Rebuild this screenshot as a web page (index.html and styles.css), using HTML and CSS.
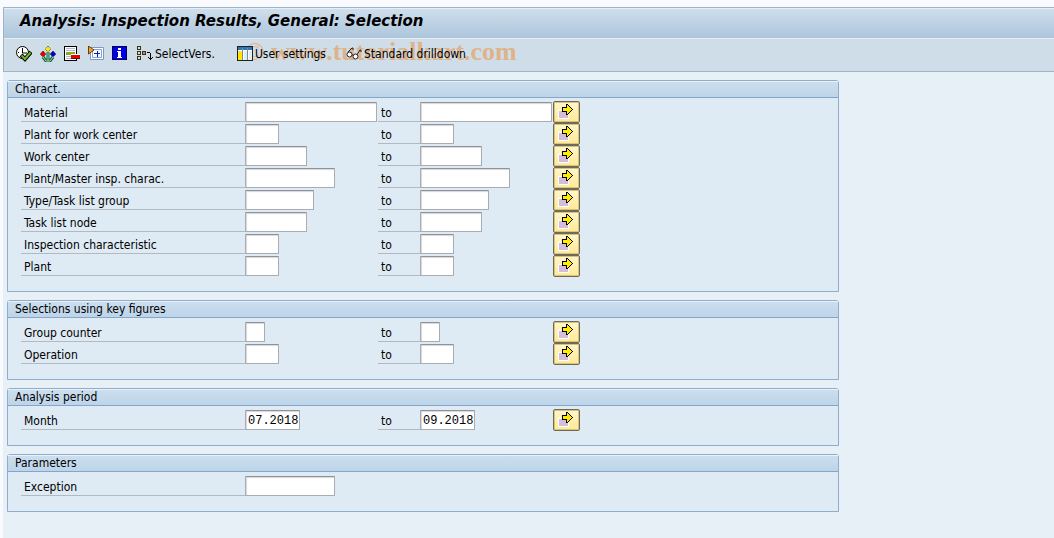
FILE: index.html
```html
<!DOCTYPE html>
<html lang="en">

<head>
  <meta charset="UTF-8">
  <title>Analysis: Inspection Results, General: Selection</title>
  <link rel="stylesheet" href="styles.css">
</head>

<body>
  <svg class="defs" aria-hidden="true">
    <symbol id="more" viewBox="0 0 15 16">
      <path fill="#fff" d="M0 6h11v9H0z"/>
      <path fill="#d3bddd" d="M1 7h9v7H1z"/>
      <path fill="#000" d="M8 0h2v1h1v1h1v1h1v1h1v1h1v1h-1v1h-1v1h-1v1h-1v1h-1v1H8V8H4V3h4z"/>
      <path fill="#ffec00" d="M9 1h1v1h1v1h1v1h1v1h1v1h-1v1h-1v1h-1v1h-1v1H9V7H5V4h4z"/>
    </symbol>
  </svg>

  <div class="window">
    <h1 class="title">Analysis: Inspection Results, General: Selection</h1>

    <div class="toolbar">
      <button class="tool" aria-label="Execute">
        <svg width="16" height="16" viewBox="0 0 16 16">
          <circle cx="6.500" cy="6.500" r="6" fill="#fff" stroke="#000"/>
          <path d="M6.500 2v5H11M2 6.500h1M6.500 10v2" fill="none" stroke="#000"/>
          <path d="M5 9l4 4 6-7" fill="none" stroke="#000" stroke-width="4"/>
          <path d="M5.500 9.500L9 13l5.500-6.500" fill="none" stroke="#76b82a" stroke-width="2"/>
        </svg>
      </button>
      <button class="tool" aria-label="Get variant">
        <svg width="16" height="16" viewBox="0 0 16 16">
          <path d="M8 6v9M3 11l3 4h4l3-4" fill="none" stroke="#1c5c3c" stroke-width="3"/>
          <path d="M8 6v9M3 11l3 4h4l3-4" fill="none" stroke="#8fe0b0"/>
          <path d="M8 0l3 3-3 3-3-3z" fill="#ffe500" stroke="#555" stroke-dasharray="1 1"/>
          <path d="M3 5l3 3-3 3-3-3z" fill="#e80000" stroke="#333" stroke-dasharray="1 1"/>
          <path d="M13 5l3 3-3 3-3-3z" fill="#0000d8" stroke="#333" stroke-dasharray="1 1"/>
        </svg>
      </button>
      <button class="tool" aria-label="Delete selection row">
        <svg width="16" height="16" viewBox="0 0 16 16" shape-rendering="crispEdges">
          <path d="M0 0h13v15H0z" fill="#000"/>
          <path d="M1 1h11v13H1z" fill="#fff"/>
          <path d="M2 2h9v1H2zM2 4h9v1H2zM2 10h5v1H2zM2 12h5v1H2z" fill="#b4b4cc"/>
          <path d="M2 6h9v3H2z" fill="#86ac20"/>
          <path d="M7 8h9v5H7z" fill="#fff"/>
          <path d="M7 9h9v3H7z" fill="#e80000"/>
          <path d="M7 12h9v1H7z" fill="#701010"/>
        </svg>
      </button>
      <button class="tool" aria-label="Dynamic selections">
        <svg width="16" height="16" viewBox="0 0 16 16">
          <path d="M2.500 1.500h13v12h-13z" fill="#fff" stroke="#8098c8"/>
          <path d="M4.500 3.500h9v8h-9z" fill="#f4f8ff" stroke="#88a0d8"/>
          <path d="M9.500 5v6M6 7.500h6" stroke="#0020c0" fill="none"/>
          <path d="M.5 0v8l5.500-4z" fill="#f8a020" stroke="#604010"/>
        </svg>
      </button>
      <button class="tool" aria-label="Information">
        <svg width="16" height="16" viewBox="0 0 16 16" shape-rendering="crispEdges">
          <path d="M0 0h15v14H0z" fill="#000050"/>
          <path d="M1 1h13v12H1z" fill="#0000e8"/>
          <path d="M6 2h3v2H6zM5 5h4v6h1v1H5v-1h1V6H5z" fill="#fff"/>
        </svg>
      </button>
      <button class="tool">
        <svg width="17" height="16" viewBox="0 0 17 16" shape-rendering="crispEdges">
          <path d="M1 0h4v4H1zM1 5h4v4H1zM1 10h4v4H1zM6 5h4v4H6z" fill="#333"/>
          <path d="M2 1h2v2H2zM2 6h2v2H2zM2 11h2v2H2z" fill="#d8e890"/>
          <path d="M7 6h2v2H7z" fill="#f88020"/>
          <path d="M11 6h3v1h1v5h1v-1h1v1h-1v1h-1v1h-1v-1h-1v-1h-1v-1h1v1h1V7h-3z" fill="#000"/>
        </svg>
        SelectVers.
      </button>
      <button class="tool settings">
        <svg width="16" height="16" viewBox="0 0 16 16" shape-rendering="crispEdges">
          <path d="M0 0h16v15H0z" fill="#202020"/>
          <path d="M1 1h14v13H1z" fill="#fff"/>
          <path d="M1 1h14v3H1z" fill="#2878c0"/>
          <path d="M1 5h4v9H1z" fill="#ffe500"/>
          <path d="M5 2h1v12H5zM10 2h1v12h-1z" fill="#808890"/>
          <path d="M7 5h3v9H7zM12 5h3v9h-3z" fill="#dceef6"/>
        </svg>
        User settings
      </button>
      <button class="tool drill">
        <svg width="16" height="16" viewBox="0 0 16 16">
          <g fill="none" stroke="#222">
            <circle cx="3.500" cy="8.500" r="2.500" fill="#fff"/>
            <circle cx="9.500" cy="10.500" r="2.500" fill="#fff"/>
            <path d="M2 6l4-4h1v2M6 8.500l1.500 1M11 8.500L14 4h1v2"/>
          </g>
        </svg>
        Standard drilldown
      </button>
      <span class="watermark"><span class="copy">©</span> www.tutorialkart.com</span>
    </div>

    <form class="content">
      <fieldset class="group">
        <legend class="head">Charact.</legend>
        <div class="row">
          <label class="name" for="material">Material</label>
          <input class="w18" id="material">
          <label class="to" for="material-to">to</label>
          <input class="w18" id="material-to">
          <button type="button" class="more" aria-label="Multiple selection"><svg width="15" height="16"><use href="#more"/></svg></button>
        </div>
        <div class="row">
          <label class="name" for="wcplant">Plant for work center</label>
          <input class="w4" id="wcplant">
          <label class="to" for="wcplant-to">to</label>
          <input class="w4" id="wcplant-to">
          <button type="button" class="more" aria-label="Multiple selection"><svg width="15" height="16"><use href="#more"/></svg></button>
        </div>
        <div class="row">
          <label class="name" for="wc">Work center</label>
          <input class="w8" id="wc">
          <label class="to" for="wc-to">to</label>
          <input class="w8" id="wc-to">
          <button type="button" class="more" aria-label="Multiple selection"><svg width="15" height="16"><use href="#more"/></svg></button>
        </div>
        <div class="row">
          <label class="name" for="master">Plant/Master insp. charac.</label>
          <input class="w12" id="master">
          <label class="to" for="master-to">to</label>
          <input class="w12" id="master-to">
          <button type="button" class="more" aria-label="Multiple selection"><svg width="15" height="16"><use href="#more"/></svg></button>
        </div>
        <div class="row">
          <label class="name" for="tasklist">Type/Task list group</label>
          <input class="w9" id="tasklist">
          <label class="to" for="tasklist-to">to</label>
          <input class="w9" id="tasklist-to">
          <button type="button" class="more" aria-label="Multiple selection"><svg width="15" height="16"><use href="#more"/></svg></button>
        </div>
        <div class="row">
          <label class="name" for="node">Task list node</label>
          <input class="w8" id="node">
          <label class="to" for="node-to">to</label>
          <input class="w8" id="node-to">
          <button type="button" class="more" aria-label="Multiple selection"><svg width="15" height="16"><use href="#more"/></svg></button>
        </div>
        <div class="row">
          <label class="name" for="inspchar">Inspection characteristic</label>
          <input class="w4" id="inspchar">
          <label class="to" for="inspchar-to">to</label>
          <input class="w4" id="inspchar-to">
          <button type="button" class="more" aria-label="Multiple selection"><svg width="15" height="16"><use href="#more"/></svg></button>
        </div>
        <div class="row">
          <label class="name" for="plant">Plant</label>
          <input class="w4" id="plant">
          <label class="to" for="plant-to">to</label>
          <input class="w4" id="plant-to">
          <button type="button" class="more" aria-label="Multiple selection"><svg width="15" height="16"><use href="#more"/></svg></button>
        </div>
      </fieldset>

      <fieldset class="group">
        <legend class="head">Selections using key figures</legend>
        <div class="row">
          <label class="name" for="counter">Group counter</label>
          <input class="w2" id="counter">
          <label class="to" for="counter-to">to</label>
          <input class="w2" id="counter-to">
          <button type="button" class="more" aria-label="Multiple selection"><svg width="15" height="16"><use href="#more"/></svg></button>
        </div>
        <div class="row">
          <label class="name" for="operation">Operation</label>
          <input class="w4" id="operation">
          <label class="to" for="operation-to">to</label>
          <input class="w4" id="operation-to">
          <button type="button" class="more" aria-label="Multiple selection"><svg width="15" height="16"><use href="#more"/></svg></button>
        </div>
      </fieldset>

      <fieldset class="group">
        <legend class="head">Analysis period</legend>
        <div class="row">
          <label class="name" for="month">Month</label>
          <input class="w7" id="month" value="07.2018">
          <label class="to" for="month-to">to</label>
          <input class="w7" id="month-to" value="09.2018">
          <button type="button" class="more" aria-label="Multiple selection"><svg width="15" height="16"><use href="#more"/></svg></button>
        </div>
      </fieldset>

      <fieldset class="group">
        <legend class="head">Parameters</legend>
        <div class="row">
          <label class="name" for="exception">Exception</label>
          <input class="w12" id="exception">
        </div>
      </fieldset>
    </form>
  </div>
</body>

</html>
```
FILE: styles.css
```css
* {
  box-sizing: border-box;
}

body {
  margin: 0;
  padding: 7px 0 0 3px;
  min-height: 100vh;
  display: flex;
  background-color: #f9fafd;
  color: #000;
  font-family: "DejaVu Sans Condensed", "DejaVu Sans", sans-serif;
  font-size: 12px;
}

.defs {
  position: absolute;
  width: 0;
  height: 0;
}

.window {
  flex: 1;
  background-color: #e8f0f7;
}

.title {
  margin: 0;
  height: 31px;
  padding-left: 16px;
  border: 1px solid #9db4cc;
  border-width: 1px 0 0 1px;
  box-shadow: inset 0 1px #e6eff7;
  background: linear-gradient(#cfdfec, #adc5dc);
  font-family: "DejaVu Sans", sans-serif;
  font-size: 15px;
  font-style: italic;
  line-height: 27px;
  white-space: nowrap;
}

.toolbar {
  position: relative;
  height: 34px;
  padding: 0 0 1px 12px;
  display: flex;
  align-items: center;
  gap: 8px;
  border: 1px solid #9db4cc;
  border-width: 0 0 1px 1px;
  box-shadow: inset 0 1px #e6eff7;
  background-color: #cfdde8;
}

.tool {
  z-index: 1;
  padding: 0;
  display: flex;
  align-items: center;
  gap: 2px;
  border: none;
  background: none;
  color: #000;
  font: inherit;
  white-space: nowrap;
}

.settings {
  margin-left: 14px;
}

.drill {
  margin-left: 12px;
}

.watermark {
  position: absolute;
  left: 241px;
  top: 0;
  color: #f08a2c;
  opacity: 0.5;
  font-family: "Liberation Serif", serif;
  font-size: 26px;
  font-weight: bold;
  line-height: 28px;
  white-space: nowrap;
  pointer-events: none;
}

.copy {
  font-weight: normal;
}

.content {
  padding: 8px 4px;
  display: flex;
  flex-direction: column;
  gap: 8px;
}

.group {
  width: 100%;
  max-width: 832px;
  min-width: 0;
  margin: 0;
  padding: 0 0 14px;
  border: 1px solid #8eadcd;
  border-radius: 3px 3px 0 0;
  background-color: #deeaf4;
}

.head {
  float: left;
  width: 100%;
  height: 17px;
  margin-bottom: 3px;
  padding: 0 7px;
  border-bottom: 1px solid #86a6c9;
  box-shadow: inset 0 1px #e9f2f9;
  background: linear-gradient(#cddfee, #bdd4e9);
  line-height: 16px;
}

.row {
  clear: both;
  height: 22px;
  padding-left: 13px;
  display: grid;
  grid-template-columns: 224px 133px 42px 133px 27px;
  align-items: center;
}

.name,
.to {
  height: 20px;
  padding-left: 3px;
  border-bottom: 1px solid #b3b9bf;
  line-height: 22px;
  white-space: nowrap;
}

.row input {
  height: 20px;
  padding: 2px 0 0 2px;
  border: 1px solid #a9adb2;
  border-top-color: #8f9398;
  border-radius: 1px;
  box-shadow: inset 1px 1px 1px #d5d8dc;
  background-color: #fff;
  font-family: "Liberation Mono", monospace;
  font-size: 12px;
}

.row .w2 { width: 20px; }
.row .w4 { width: 34px; }
.row .w7 { width: 55px; }
.row .w8 { width: 62px; }
.row .w9 { width: 69px; }
.row .w12 { width: 90px; }
.row .w18 { width: 132px; }

.more {
  width: 27px;
  height: 22px;
  padding: 0 0 0 4px;
  display: flex;
  align-items: center;
  border: 1px solid #6e6a58;
  border-radius: 2px;
  box-shadow: inset 0 0 0 1px #d8c27c;
  background: linear-gradient(#fff6cf, #ffe993);
}
```
